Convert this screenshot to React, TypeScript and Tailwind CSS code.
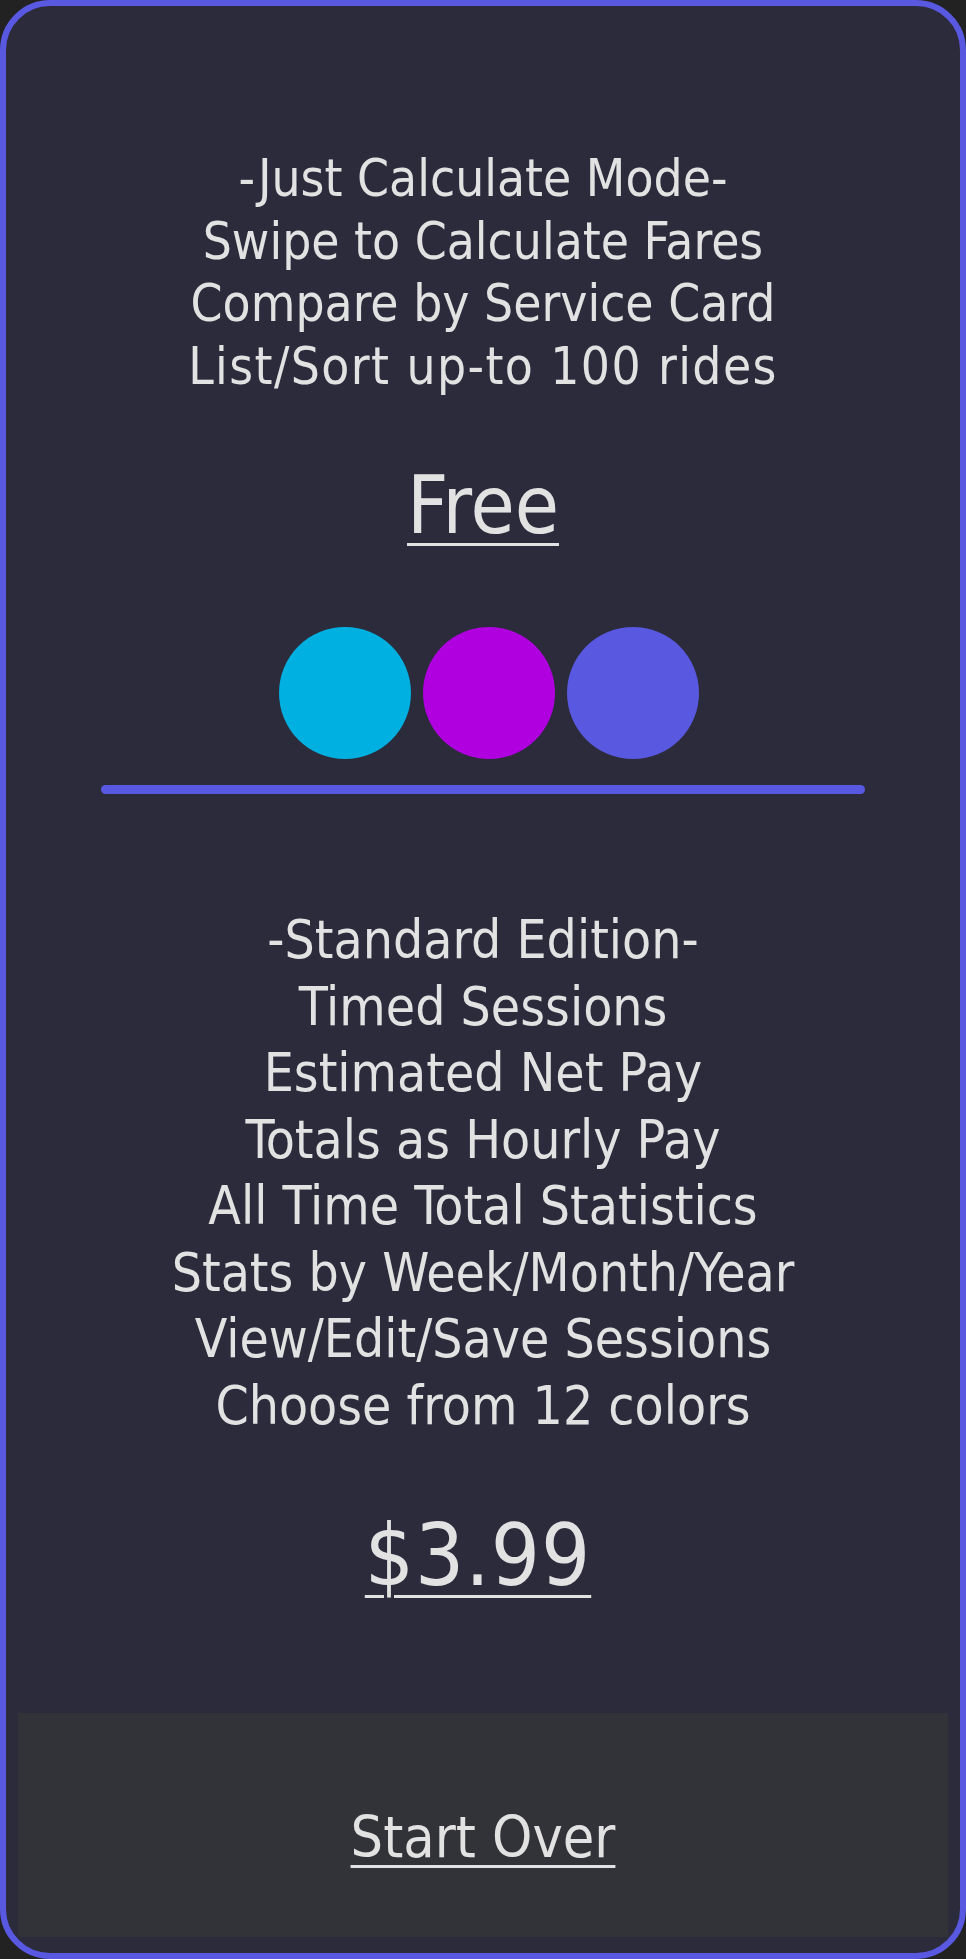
import React from "react";

const freeFeatures = [
  "-Just Calculate Mode-",
  "Swipe to Calculate Fares",
  "Compare by Service Card",
  "List/Sort up-to 100 rides",
];

const standardFeatures = [
  "-Standard Edition-",
  "Timed Sessions",
  "Estimated Net Pay",
  "Totals as Hourly Pay",
  "All Time Total Statistics",
  "Stats by Week/Month/Year",
  "View/Edit/Save Sessions",
  "Choose from 12 colors",
];

const dots = ["bg-[#00b0e0]", "bg-[#b000e0]", "bg-[#5858e0]"];

export default function App() {
  return (
    <div
      className="min-h-screen bg-[#222222] text-[#e2e2e2]"
      style={{ fontFamily: '"DejaVu Sans Condensed", "DejaVu Sans", "Liberation Sans", sans-serif', fontStretch: "condensed" }}
    >
      <div className="flex h-[1959px] w-full flex-col items-center rounded-[50px] border-[6px] border-[#5858e0] bg-[#2c2b3c]">
        {/* free tier */}
        <div className="mt-[142px] text-center text-[51px] leading-[62.5px]">
          {freeFeatures.map((f, i) => (
            <div key={f} className={i === 3 ? "tracking-[1.4px]" : ""}>
              {f}
            </div>
          ))}
        </div>
        <div className="mt-[60px] text-[80px] leading-[96px] underline decoration-[3px] underline-offset-[10px]">
          Free
        </div>

        <div className="mt-[73px] ml-[12px] flex gap-[12px]">
          {dots.map((c) => (
            <div key={c} className={`h-[132px] w-[132px] rounded-full ${c}`} />
          ))}
        </div>
        <div className="mt-[26px] h-[9px] w-[764px] rounded-full bg-[#5858e0]" />

        {/* standard tier */}
        <div className="mt-[113px] text-center text-[53px] leading-[66.5px]">
          {standardFeatures.map((f) => (
            <div key={f}>{f}</div>
          ))}
        </div>
        <div className="mt-[65px] mr-[10px] text-[86px] leading-[103px] tracking-[1px] underline decoration-[3px] underline-offset-[10px]">
          $3.99
        </div>

        <div className="mt-auto mb-[16px] flex h-[224px] w-[930px] items-center justify-center bg-[#323239] pt-[24px]">
          <span className="text-[57px] leading-[68px] underline decoration-[3px] underline-offset-[8px]">
            Start Over
          </span>
        </div>
      </div>
    </div>
  );
}
